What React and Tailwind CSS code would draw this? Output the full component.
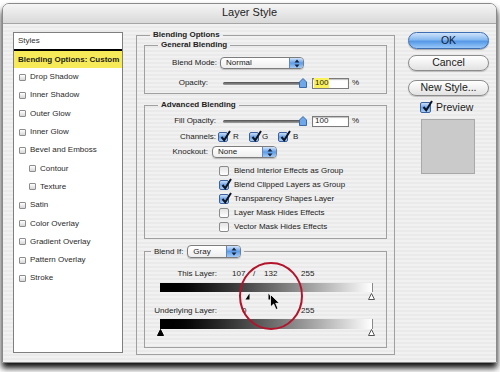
import React from "react";

const styleItems = [
  { label: "Drop Shadow" },
  { label: "Inner Shadow" },
  { label: "Outer Glow" },
  { label: "Inner Glow" },
  { label: "Bevel and Emboss" },
  { label: "Contour", sub: true },
  { label: "Texture", sub: true },
  { label: "Satin" },
  { label: "Color Overlay" },
  { label: "Gradient Overlay" },
  { label: "Pattern Overlay" },
  { label: "Stroke" },
];

const advancedChecks = [
  { label: "Blend Interior Effects as Group", checked: false },
  { label: "Blend Clipped Layers as Group", checked: true },
  { label: "Transparency Shapes Layer", checked: true },
  { label: "Layer Mask Hides Effects", checked: false },
  { label: "Vector Mask Hides Effects", checked: false },
];

function StyleItem({ label, sub }) {
  return (
    <div className={`h-[18.3px] flex items-center text-[8px] text-[#2a2a2a] ${sub ? "pl-[15px]" : "pl-[5px]"}`}>
      <span className="w-[7px] h-[7px] shrink-0 rounded-[1px] border border-[#8d8d8d] bg-gradient-to-b from-white to-[#d6d6d6]" />
      <span className="ml-[4px]">{label}</span>
    </div>
  );
}

function Check({ checked, big, className = "" }) {
  return (
    <span
      className={`relative inline-block shrink-0 rounded-[2px] border ${big ? "w-[11px] h-[11px]" : "w-[10px] h-[10px]"} ${
        checked
          ? "border-[#3a62a0] bg-gradient-to-b from-[#c9def8] via-[#6ea3e6] to-[#a9ccf4]"
          : "border-[#8b8b8b] bg-gradient-to-b from-[#e4e4e4] to-white"
      } ${className}`}
    >
      {checked && (
        <svg className="absolute left-[1px] top-[-3px]" width="11" height="12" viewBox="0 0 11 12">
          <path d="M1.5 7 L4.2 10.2 L10 1" stroke="#0e1422" strokeWidth="2" fill="none" />
        </svg>
      )}
    </span>
  );
}

function PopUp({ value, className }) {
  return (
    <div className={`flex overflow-hidden rounded-[4px] border border-[#7d7d7d] bg-gradient-to-b from-white to-[#eeeeee] shadow-[0_1px_1px_rgba(0,0,0,0.2)] ${className}`}>
      <div className="flex-1 flex items-center pl-[5px] text-[8px] leading-none text-[#222]">{value}</div>
      <div className="w-[14px] flex items-center justify-center border-l border-[#5f86bf] bg-gradient-to-b from-[#d2e5fa] via-[#5d9de8] to-[#a3caf4]">
        <svg width="6" height="9" viewBox="0 0 6 9">
          <path d="M3 0.5 L5.5 3.5 H0.5Z M3 8.5 L5.5 5.5 H0.5Z" fill="#17223c" />
        </svg>
      </div>
    </div>
  );
}

function Slider() {
  return (
    <div className="relative w-[85px] h-[10px] flex items-center">
      <div className="w-[81px] h-[3px] rounded-full bg-gradient-to-b from-[#4f4f4f] to-[#a3a3a3]" />
      <svg className="absolute right-[1px] top-0" width="8" height="10" viewBox="0 0 8 10">
        <path d="M4 0.5 L7.5 4 V9.5 H0.5 V4 Z" fill="#6ea8ea" stroke="#3c6aa8" />
      </svg>
    </div>
  );
}

function NumField({ hl }) {
  return (
    <div className="w-[37px] h-[11px] flex items-center pl-[1px] border border-[#7b7b7b] bg-white shadow-[inset_0_1px_1px_rgba(0,0,0,0.25)] text-[8px] leading-none">
      <span className={hl ? "bg-[#f9f05a] px-[1px] py-[1px]" : "px-[1px]"}>100</span>
    </div>
  );
}

function UpTriangle({ white }) {
  return (
    <svg width="7" height="7" viewBox="0 0 7 7">
      <path d="M3.5 0.5 L6.5 6.5 H0.5 Z" fill={white ? "#fff" : "#000"} stroke={white ? "#555" : "#000"} strokeWidth="1" />
    </svg>
  );
}

function HalfTriangle({ flip }) {
  return (
    <svg width="5" height="7" viewBox="0 0 5 7">
      <path d={flip ? "M0.5 0.5 L4.5 6.5 H0.5 Z" : "M4.5 0.5 L4.5 6.5 H0.5 Z"} fill="#000" />
    </svg>
  );
}

function Fieldset({ legend, className, children }) {
  return (
    <fieldset className={`border border-[#a0a0a0] ${className}`}>
      <legend className="ml-[13px] px-[3px] text-[8px] font-bold leading-[10px] text-[#222]">{legend}</legend>
      {children}
    </fieldset>
  );
}

export default function App() {
  return (
    <div className="w-[500px] h-[372px] overflow-hidden bg-white pl-[2px] pt-[3px] font-['Liberation_Sans',Arial,sans-serif] text-[#1c1c1c]">
      <div className="w-[495px] h-[360px] flex flex-col overflow-hidden rounded-t-[7px] border border-[#8a8a8a] shadow-[0_5px_6px_rgba(0,0,0,0.95)]">
        {/* Title bar */}
        <div className="h-[20px] shrink-0 flex items-center justify-center pb-[2px] border-b border-[#a5a5a5] bg-gradient-to-b from-[#f5f5f5] to-[#d9d9d9] text-[11px] text-[#222]">
          Layer Style
        </div>

        <div className="flex-1 flex items-start bg-[repeating-linear-gradient(180deg,#f1f1f1_0px,#f1f1f1_2px,#eaeaea_2px,#eaeaea_4px)]">
          {/* Styles list */}
          <div className="ml-[10px] mt-[8px] w-[110px] h-[321px] shrink-0 border border-[#7f7f7f] bg-white">
            <div className="h-[18px] flex items-center pl-[4px] text-[8px] text-[#333] border-b-2 border-black">Styles</div>
            <div className="h-[17px] flex items-center pl-[4px] bg-[#f6ea58] text-[8px] font-bold">Blending Options: Custom</div>
            {styleItems.map((item) => (
              <StyleItem key={item.label} label={item.label} sub={item.sub} />
            ))}
          </div>

          {/* Blending options */}
          <Fieldset legend="Blending Options" className="ml-[13px] mt-[6px] w-[259px] shrink-0 pb-[6px]">
            <Fieldset legend="General Blending" className="mx-[7px] pb-[4px]">
              <div className="mt-[7px] h-[12px] flex items-center text-[8px]">
                <span className="w-[72px] text-right">Blend Mode:</span>
                <PopUp value="Normal" className="ml-[3px] w-[84px] h-[12px]" />
              </div>
              <div className="mt-[8px] h-[12px] flex items-center text-[8px]">
                <span className="w-[63px] text-right">Opacity:</span>
                <div className="ml-[15px]"><Slider /></div>
                <div className="ml-[4px]"><NumField hl /></div>
                <span className="ml-[3px]">%</span>
              </div>
            </Fieldset>

            <Fieldset legend="Advanced Blending" className="mx-[7px] mt-[6px] pb-[4px]">
              <div className="mt-[5px] h-[12px] flex items-center text-[8px]">
                <span className="w-[71px] text-right">Fill Opacity:</span>
                <div className="ml-[7px]"><Slider /></div>
                <div className="ml-[4px]"><NumField /></div>
                <span className="ml-[3px]">%</span>
              </div>
              <div className="mt-[4px] h-[12px] flex items-center text-[8px]">
                <span className="w-[71px] text-right">Channels:</span>
                <Check checked className="ml-[2px]" />
                <span className="ml-[5px] w-[16px]">R</span>
                <Check checked />
                <span className="ml-[3px] w-[16px]">G</span>
                <Check checked />
                <span className="ml-[5px]">B</span>
              </div>
              <div className="mt-[3px] h-[12px] flex items-center text-[8px]">
                <span className="w-[63px] text-right">Knockout:</span>
                <PopUp value="None" className="ml-[4px] w-[65px] h-[12px]" />
              </div>
              <div className="mt-[6px]">
                {advancedChecks.map((c) => (
                  <div key={c.label} className="h-[14px] flex items-center pl-[74px] text-[8px]">
                    <Check checked={c.checked} />
                    <span className="ml-[5px]">{c.label}</span>
                  </div>
                ))}
              </div>
            </Fieldset>

            <fieldset className="mx-[7px] mt-[6px] pb-[10px] border border-[#a0a0a0]">
              <legend className="ml-[6px] px-[3px]">
                <div className="flex items-center">
                  <span className="text-[8px] text-[#222]">Blend If:</span>
                  <PopUp value="Gray" className="ml-[4px] w-[54px] h-[13px]" />
                </div>
              </legend>

              <div className="relative mt-[10px] text-[8px]">
                <div className="h-[12px] flex items-center">
                  <span className="w-[72px] text-right">This Layer:</span>
                  <span className="ml-[15px] w-[21px]">107</span>
                  <span className="w-[11px]">/</span>
                  <span className="w-[37px]">132</span>
                  <span>255</span>
                </div>
                <div className="mt-[3px] ml-[15px] w-[213px] h-[9px] bg-gradient-to-r from-black to-white border-r border-[#8a8a8a]" />
                <div className="relative ml-[15px] w-[216px] h-[8px]">
                  <span className="absolute left-[85px] top-[1px] flex"><HalfTriangle /></span>
                  <span className="absolute left-[108px] top-[1px] flex"><HalfTriangle flip /></span>
                  <span className="absolute left-[208px] top-[1px] flex"><UpTriangle white /></span>
                </div>

                <div className="mt-[5px] h-[12px] flex items-center">
                  <span className="w-[72px] text-right">Underlying Layer:</span>
                  <span className="ml-[25px] w-[59px]">0</span>
                  <span>255</span>
                </div>
                <div className="mt-[2px] ml-[15px] w-[213px] h-[10px] bg-gradient-to-r from-black to-white border-r border-[#8a8a8a]" />
                <div className="relative ml-[12px] w-[219px] h-[8px]">
                  <span className="absolute left-0 top-0 flex"><UpTriangle /></span>
                  <span className="absolute left-[211px] top-0 flex"><UpTriangle white /></span>
                </div>

                {/* highlight circle and pointer */}
                <svg className="absolute left-[93px] top-[-7px] pointer-events-none" width="66" height="70" viewBox="0 0 66 70">
                  <ellipse cx="33" cy="35" rx="31" ry="33" fill="none" stroke="#b3142c" strokeWidth="2" />
                </svg>
                <svg className="absolute left-[125px] top-[26px]" width="10" height="17" viewBox="0 0 10 17">
                  <path d="M0.5 0.5 L0.5 13 L3.6 10 L6 15.5 L8 14.6 L5.7 9.3 L9.5 9.3 Z" fill="#000" stroke="#fff" strokeWidth="0.8" />
                </svg>
              </div>
            </fieldset>
          </Fieldset>

          {/* Buttons */}
          <div className="ml-[13px] mt-[8px] w-[81px] shrink-0 flex flex-col">
            <div className="h-[17px] flex items-center justify-center rounded-full border border-[#3d6db3] bg-[linear-gradient(180deg,#cfe3fa_0%,#86b9f0_45%,#5598e7_55%,#9ac8f7_100%)] text-[10.5px] text-[#10203a] shadow-[0_1px_1px_rgba(0,0,0,0.3)]">
              OK
            </div>
            <div className="mt-[6px] h-[16px] flex items-center justify-center rounded-full border border-[#8c8c8c] bg-gradient-to-b from-white via-[#f1f1f1] to-[#e2e2e2] text-[10.5px] text-[#1a1a1a] shadow-[0_1px_1px_rgba(0,0,0,0.2)]">
              Cancel
            </div>
            <div className="mt-[9px] h-[16px] flex items-center justify-center rounded-full border border-[#8c8c8c] bg-gradient-to-b from-white via-[#f1f1f1] to-[#e2e2e2] text-[10.5px] text-[#1a1a1a] shadow-[0_1px_1px_rgba(0,0,0,0.2)]">
              New Style...
            </div>
            <div className="mt-[6px] h-[11px] flex items-center pl-[12px] text-[10.5px]">
              <Check checked big />
              <span className="ml-[5px]">Preview</span>
            </div>
            <div className="mt-[6px] ml-[13px] w-[54px] h-[55px] border border-[#a9a9a9] bg-[#cacaca]" />
          </div>
        </div>
      </div>
    </div>
  );
}
